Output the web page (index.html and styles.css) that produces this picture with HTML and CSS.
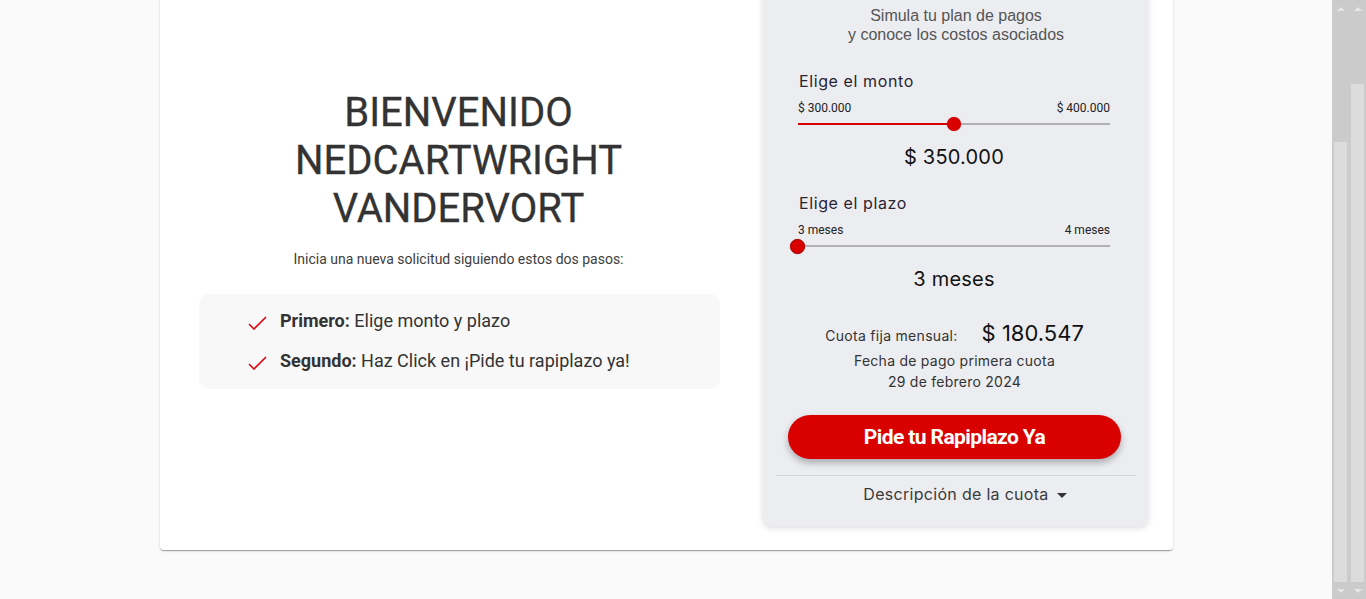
FILE: index.html
```html
<!DOCTYPE html>
<html lang="es">
<head>
<meta charset="utf-8">
<title>Rapiplazo</title>
<link rel="stylesheet" href="styles.css">
</head>
<body>
<div class="viewport">
  <main class="page">
    <section class="card">
      <div class="welcome">
        <h1 class="welcome-title">BIENVENIDO<br>NEDCARTWRIGHT<br>VANDERVORT</h1>
        <p class="welcome-lead">Inicia una nueva solicitud siguiendo estos dos pasos:</p>
        <ul class="steps">
          <li class="step">
            <svg class="check" width="19" height="18" viewBox="0 0 19 18"><polyline points="1,12 6,17 18,5" fill="none" stroke="#e3000f" stroke-width="1.6"/></svg>
            <span><b>Primero:</b> Elige monto y plazo</span>
          </li>
          <li class="step">
            <svg class="check" width="19" height="18" viewBox="0 0 19 18"><polyline points="1,12 6,17 18,5" fill="none" stroke="#e3000f" stroke-width="1.6"/></svg>
            <span><b>Segundo:</b> Haz Click en ¡Pide tu rapiplazo ya!</span>
          </li>
        </ul>
      </div>

      <aside class="sim">
        <p class="sim-title">Simula tu plan de pagos<br>y conoce los costos asociados</p>

        <div class="fields">
          <div class="field">
            <div class="field-label">Elige el monto</div>
            <div class="range-labels"><span>$ 300.000</span><span>$ 400.000</span></div>
            <div class="slider">
              <div class="track"><div class="fill" style="width:50%"></div></div>
              <div class="thumb" style="left:50%"></div>
            </div>
            <div class="field-value">$ 350.000</div>
          </div>

          <div class="field field-second">
            <div class="field-label">Elige el plazo</div>
            <div class="range-labels"><span>3 meses</span><span>4 meses</span></div>
            <div class="slider">
              <div class="track"><div class="fill" style="width:0%"></div></div>
              <div class="thumb thumb-edge" style="left:0%"></div>
            </div>
            <div class="field-value">3 meses</div>
          </div>
        </div>

        <div class="summary">
          <div class="cuota">
            <span class="cuota-label">Cuota fija mensual:</span>
            <span class="cuota-value">$ 180.547</span>
          </div>
          <p class="fecha">Fecha de pago primera cuota<br>29 de febrero 2024</p>
          <button class="cta" type="button">Pide tu Rapiplazo Ya</button>
        </div>

        <div class="divider"></div>
        <div class="desc"><span>Descripción de la cuota</span><span class="caret"></span></div>
      </aside>
    </section>
  </main>

  <div class="scrollbars">
    <div class="sb">
      <div class="sb-arrow"><span class="tri-up"></span></div>
      <div class="sb-space sb-space-inner"></div>
      <div class="sb-thumb"></div>
      <div class="sb-arrow"><span class="tri-down"></span></div>
    </div>
    <div class="sb">
      <div class="sb-arrow"><span class="tri-up"></span></div>
      <div class="sb-space sb-space-outer"></div>
      <div class="sb-thumb"></div>
      <div class="sb-arrow"><span class="tri-down"></span></div>
    </div>
  </div>
</div>
</body>
</html>
```

FILE: styles.css
```css
* { box-sizing: border-box; }

html, body {
  margin: 0;
  padding: 0;
}

body {
  font-family: Roboto, "Liberation Sans", sans-serif;
  color: #333;
  background: #fafafa;
}

.viewport {
  display: flex;
  width: 1366px;
  height: 599px;
  overflow: hidden;
}

.page {
  width: 1332px;
  flex: none;
  background: #fafafa;
  padding-left: 160px;
}

.card {
  width: 1013px;
  margin-top: -40px;
  display: flex;
  align-items: flex-start;
  background: #fff;
  border-radius: 4px;
  padding-bottom: 24px;
  box-shadow: 0 2px 1px -1px rgba(0,0,0,.2), 0 1px 1px 0 rgba(0,0,0,.14), 0 1px 3px 0 rgba(0,0,0,.12);
}

/* left column */
.welcome {
  flex: 1;
  padding-top: 129px;
  text-align: center;
}

.welcome-title {
  margin: 0;
  font-family: Roboto, sans-serif;
  font-weight: 400;
  font-size: 40px;
  line-height: 48px;
  color: #333;
  -webkit-text-stroke: 0.3px #333;
}

.welcome-lead {
  margin: 16px 0 0;
  font-size: 14px;
  line-height: 20px;
  color: #3d3d3d;
}

.steps {
  list-style: none;
  margin: 25px 37px 0 39px;
  padding: 15px 0 16px 49px;
  background: #f8f8f8;
  border-radius: 10px;
  text-align: left;
}

.step {
  display: flex;
  align-items: center;
  gap: 13px;
  font-size: 18px;
  line-height: 24px;
  color: #333;
}

.step + .step { margin-top: 16px; }

.step b { font-weight: 700; }

.check { flex: none; }

/* simulator */
.sim {
  width: 385px;
  flex: none;
  margin: 20px 25px 0 6px;
  padding: 26px 12px 22px 13px;
  background: #ecedf1;
  border-radius: 8px;
  box-shadow: 0 2px 6px rgba(0,0,0,.14);
}

.sim-title {
  margin: 0;
  text-align: center;
  font-family: "Liberation Sans", Arial, sans-serif;
  font-size: 16px;
  line-height: 19px;
  color: #555;
}

.fields {
  margin: 27px 26px 0 22px;
}

.field-second { margin-top: 23px; }

.field-label {
  font-family: Inter, "Open Sans", sans-serif;
  font-size: 16px;
  line-height: 20px;
  letter-spacing: 0.6px;
  color: #2a2433;
  padding-left: 1px;
}

.range-labels {
  display: flex;
  justify-content: space-between;
  margin-top: 10px;
  font-family: Roboto, sans-serif;
  font-size: 12px;
  line-height: 14px;
  color: #222;
}

.slider {
  position: relative;
  height: 14px;
  margin-top: 2px;
  display: flex;
  align-items: center;
}

.track {
  width: 100%;
  height: 2px;
  background: #b1b1b5;
}

.fill {
  height: 100%;
  background: #d50000;
}

.thumb {
  position: absolute;
  top: 0;
  width: 14px;
  height: 14px;
  margin-left: -7px;
  border-radius: 50%;
  background: #d90000;
  box-shadow: 0 0 1px rgba(120,0,0,.6);
}

.thumb-edge {
  margin-left: -8px;
  border: 1px solid #a80000;
  width: 15px;
  height: 15px;
}

.field-value {
  margin-top: 13px;
  text-align: center;
  font-family: Inter, "Open Sans", sans-serif;
  font-size: 20px;
  line-height: 26px;
  letter-spacing: 0.2px;
  color: #111;
}

.summary {
  margin: 27px 15px 0 12px;
  text-align: center;
}

.cuota {
  display: flex;
  justify-content: center;
  align-items: baseline;
  gap: 24px;
  font-family: Inter, "Open Sans", sans-serif;
  color: #1a1a1a;
}

.cuota-label {
  font-size: 14px;
  line-height: 28px;
  letter-spacing: 0.3px;
  color: #333;
}

.cuota-value {
  font-size: 22px;
  line-height: 28px;
  color: #111;
}

.fecha {
  margin: 0;
  font-family: Inter, "Open Sans", sans-serif;
  font-size: 14px;
  line-height: 21px;
  letter-spacing: 0.25px;
  color: #333;
}

.cta {
  display: block;
  width: 100%;
  height: 44px;
  margin-top: 23px;
  border: 0;
  border-radius: 22px;
  background: #d90000;
  color: #fff;
  font-family: Roboto, sans-serif;
  font-weight: 700;
  font-size: 21px;
  letter-spacing: -0.6px;
  box-shadow: 0 4px 7px rgba(0,0,0,.28);
  cursor: pointer;
}

.divider {
  height: 1px;
  margin-top: 16px;
  background: #d5d6da;
}

.desc {
  margin-top: 8px;
  padding-left: 18px;
  display: flex;
  justify-content: center;
  align-items: center;
  gap: 8px;
  font-family: Inter, "Open Sans", sans-serif;
  font-size: 16px;
  line-height: 20px;
  letter-spacing: 0.3px;
  color: #3b3b3b;
}

.caret {
  width: 0;
  height: 0;
  margin-top: 3px;
  border-left: 5px solid transparent;
  border-right: 5px solid transparent;
  border-top: 5px solid #333;
}

/* scrollbars */
.scrollbars {
  width: 34px;
  flex: none;
  display: flex;
  background: #cbcbcb;
}

.sb {
  width: 17px;
  display: flex;
  flex-direction: column;
}

.sb-arrow {
  height: 17px;
  flex: none;
  display: flex;
  align-items: center;
  justify-content: center;
}

.sb-space-inner { height: 125px; flex: none; }
.sb-space-outer { height: 67px; flex: none; }

.sb-thumb {
  flex: 1;
  margin: 0 2px;
  background: #dcdcdd;
}

.tri-up, .tri-down {
  width: 0;
  height: 0;
  border-left: 4px solid transparent;
  border-right: 4px solid transparent;
}

.tri-up { border-bottom: 4px solid #e6e6e6; }
.tri-down { border-top: 4px solid #e6e6e6; }
```
